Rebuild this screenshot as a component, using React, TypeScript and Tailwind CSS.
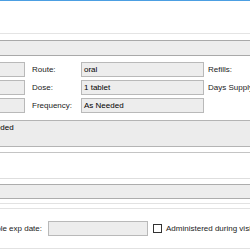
const Box = ({ children, className = "" }: { children?: React.ReactNode; className?: string }) => (
  <div className={`h-[15px] shrink-0 border border-[#b9b9b9] bg-[#ededed] flex items-center px-[2px] text-black ${className}`}>
    {children}
  </div>
);

const rows = [
  { label: "Route:", value: "oral", right: "Refills:" },
  { label: "Dose:", value: "1 tablet", right: "Days Supply:" },
  { label: "Frequency:", value: "As Needed", right: "" },
];

export default function App() {
  return (
    <div className="w-[250px] h-[250px] overflow-hidden bg-white font-['Liberation_Sans',Arial,sans-serif] text-[8px] leading-none text-[#222]">
      <div className="h-px bg-[#4c9fe2]" />
      <div className="h-[32px]" />
      <div className="h-px bg-[#e4e4e4]" />
      <div className="h-[6px]" />
      <div className="h-[16px] border-y border-[#a9a9a9] bg-[#ededed]" />

      <div className="mt-[6px] flex flex-col gap-[3px]">
        {rows.map((r) => (
          <div key={r.label} className="flex items-center whitespace-nowrap">
            <Box className="w-[25px] border-l-0" />
            <span className="ml-[7px] w-[49px] shrink-0">{r.label}</span>
            <Box className="w-[123px]">{r.value}</Box>
            <span className="ml-[4px] shrink-0">{r.right}</span>
          </div>
        ))}
      </div>

      <div className="mt-[7px] h-[27px] border-y border-[#b4b4b4] bg-[#ececec] overflow-hidden">
        <div className="-ml-[26px] pt-[3px] whitespace-nowrap text-black">As Needed</div>
      </div>

      <div className="mt-[5px] h-[27px] border-y border-t-[#c4c4c4] border-b-[#dedede] bg-white" />

      <div className="mt-[5px] h-[15px] border-y border-[#adadad] bg-[#ededed]" />

      <div className="mt-[4px] h-[6px] border-y border-[#e2e2e2]" />

      <div className="mt-[12px] flex items-center whitespace-nowrap">
        <div className="w-[42px] shrink-0 overflow-hidden flex justify-end">
          <span>Sample exp date:</span>
        </div>
        <Box className="ml-[6px] w-[100px]" />
        <div className="ml-[5px] w-[9px] h-[9px] shrink-0 border border-[#333] bg-white" />
        <span className="ml-[4px] shrink-0">Administered during visit</span>
      </div>

      <div className="mt-[12px] h-px bg-[#e2e2e2]" />
    </div>
  );
}
